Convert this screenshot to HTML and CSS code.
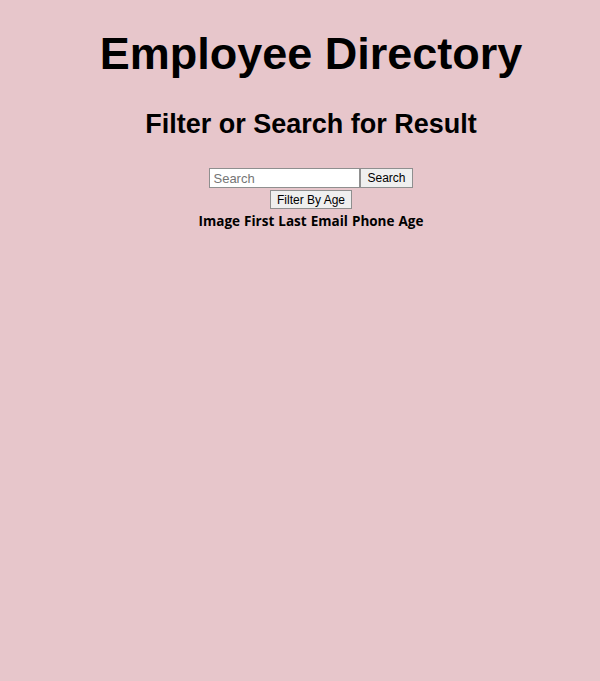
FILE: index.html
```html
<!DOCTYPE html>
<html lang="en">
<head>
    <meta charset="UTF-8">
    <meta name="viewport" content="width=device-width, initial-scale=1.0">
    <title>Employee Directory</title>
    <link rel="stylesheet" href="styles.css">
</head>
<body>

<div class="header">
    <h1>Employee Directory</h1>
    <h2>Filter or Search for Result</h2>
</div>

<div class="controls">
    <form class="search-form">
        <input type="text" class="search-input" placeholder="Search">
        <button type="button" class="btn">Search</button>
    </form>
    <button type="button" class="btn">Filter By Age</button>
</div>

<table class="employees">
    <thead>
        <tr>
            <th>Image</th>
            <th>First</th>
            <th>Last</th>
            <th>Email</th>
            <th>Phone</th>
            <th>Age</th>
        </tr>
    </thead>
    <tbody></tbody>
</table>

</body>
</html>
```

FILE: styles.css
```css
html, body {
    background-color: #e7c6cb;
}
body {
    margin: 0;
    padding-left: 22px;
    font-family: "Liberation Sans", Arial, sans-serif;
    text-align: center;
}
.header {
    padding-top: 28px;
}
h1 {
    font-size: 45px;
    margin: 0;
    line-height: 52px;
}
h2 {
    font-size: 27px;
    margin: 28px 0 0;
    line-height: 32px;
}
.controls {
    margin-top: 28px;
    display: flex;
    flex-direction: column;
    align-items: center;
    gap: 2px;
}
.search-form {
    display: flex;
    margin: 0;
}
.search-input {
    width: 151px;
    height: 20px;
    box-sizing: border-box;
    border: 1px solid #8f8f8f;
    padding: 1px 3px;
    font-family: "Liberation Sans", Arial, sans-serif;
    font-size: 13px;
    background: #fff;
}
.search-input::placeholder {
    color: #757575;
}
.btn {
    height: 19px;
    box-sizing: border-box;
    border: 1px solid #8f8f8f;
    background: #efefef;
    font-family: "Liberation Sans", Arial, sans-serif;
    font-size: 12px;
    padding: 0 6px;
    color: #000;
}
.search-form .btn {
    height: 20px;
}
.employees {
    margin: 3px auto 0;
    border-collapse: collapse;
}
.employees th {
    font-family: "Open Sans", "Noto Sans", sans-serif;
    font-size: 13.5px;
    font-weight: bold;
    padding: 0 2px;
}
```
